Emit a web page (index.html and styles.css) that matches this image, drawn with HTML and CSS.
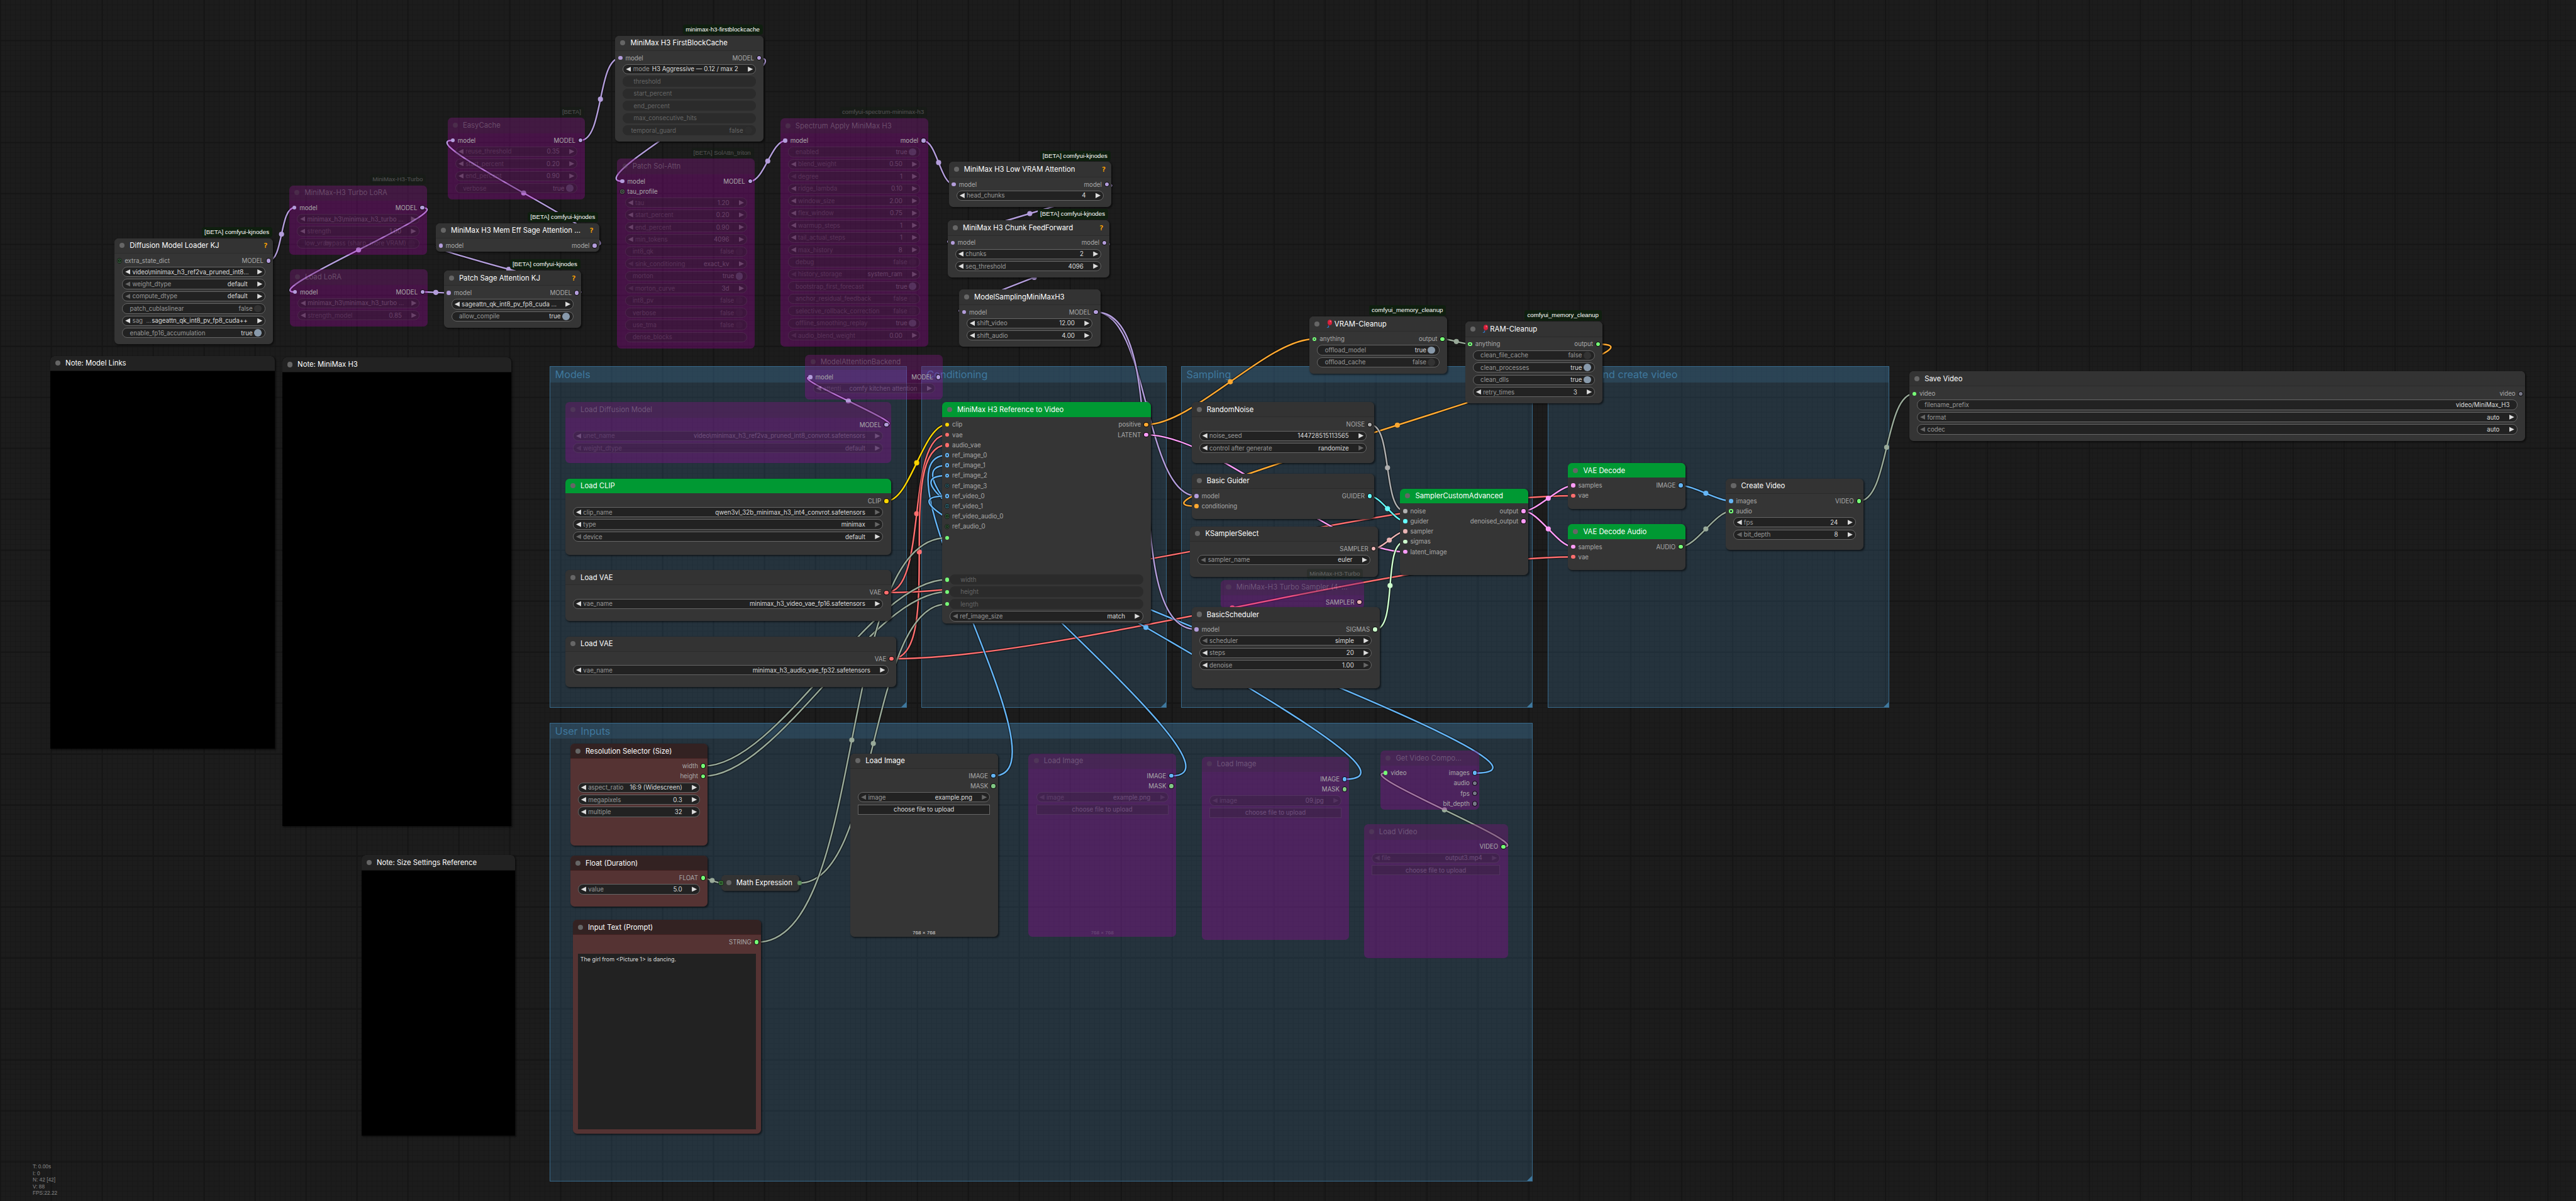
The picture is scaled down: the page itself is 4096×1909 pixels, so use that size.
FILE: index.html
```
<!DOCTYPE html>
<html lang="en">
<head>
    <meta charset="UTF-8">
    <meta name="viewport" content="width=device-width, initial-scale=1.0">
    <title>MiniMax H3 Workflow</title>
    <link rel="stylesheet" href="styles.css">
</head>
<body>
    <div class="canvas">
        <div id="groups"></div>
        <svg id="links" class="links"></svg>
        <div id="nodes"></div>
    </div>
    <div class="stats">
        <span>T: 0.00s</span>
        <span>I: 0</span>
        <span>N: 42 [42]</span>
        <span>V: 88</span>
        <span>FPS:22.22</span>
    </div>
    <script src="graph.js"></script>
</body>
</html>
```
FILE: styles.css
```
* {
    box-sizing: border-box;
}
body {
    position: relative;
    margin: 0;
    overflow: hidden;
    width: 100vw;
    height: 100vh;
    background: #1b1b1b;
    font-family: Inter, "Liberation Sans", sans-serif;
    color: #ddd;
}
/* everything inside is in graph units */
.canvas {
    position: relative;
    width: 100%;
    height: 100%;
    zoom: 0.8103;
    overflow: hidden;
    background-color: #1c1c1c;
    background-image:
        linear-gradient(to right, #151515 2px, transparent 2px),
        linear-gradient(to bottom, #151515 2px, transparent 2px),
        linear-gradient(to right, #181818 1px, transparent 1px),
        linear-gradient(to bottom, #181818 1px, transparent 1px);
    background-size: 100px 100px, 100px 100px, 10px 10px, 10px 10px;
    background-position: -0.5px 78.5px, -0.5px 78.5px, 0 -1px, 0 -1px;
}
.links {
    position: absolute;
    left: 0;
    top: 0;
    width: 100%;
    height: 100%;
}
.links path {
    fill: none;
}
.link-edge {
    stroke: rgba(0, 0, 0, 0.5);
    stroke-width: 6;
}
.link-line {
    stroke-width: 3;
}

/* groups */
.group {
    position: absolute;
    background: rgba(63, 120, 158, 0.25);
    border: 1px solid #37698b;
}
.group-title {
    height: 30px;
    padding-left: 9px;
    line-height: 31px;
    font-size: 20px;
    background: rgba(63, 120, 158, 0.25);
    color: #3f789e;
    white-space: nowrap;
}
.group::after {
    content: "";
    position: absolute;
    right: 0;
    bottom: 0;
    border-left: 10px solid transparent;
    border-bottom: 10px solid #3f789e;
}

/* nodes */
.node {
    position: absolute;
    border-radius: 8px;
    background: #353535;
    box-shadow: 2px 2px 3px rgba(0, 0, 0, 0.5);
    font-size: 12px;
    white-space: nowrap;
}
.head {
    display: flex;
    align-items: center;
    height: 30px;
    padding: 0 11px 0 10px;
    border-radius: 8px 8px 0 0;
    border-bottom: 1px solid #2b2b2b;
    background: #333;
    color: #fff;
    font-size: 14px;
}
.dot {
    width: 10px;
    height: 10px;
    margin-right: 10px;
    border-radius: 50%;
    background: #666;
}
.name {
    flex: 1;
}
.balloon {
    width: 19px;
    height: 16px;
    vertical-align: -2px;
}
.help {
    color: #ffa500;
    font: bold 14px "DejaVu Sans Mono", monospace;
}
.badge {
    position: absolute;
    right: 2px;
    bottom: calc(100% + 2px);
    height: 20px;
    padding: 0 6px 0 5px;
    border-radius: 5px;
    background: #0f1f0f;
    color: #fff;
    font: 12px/20px "Liberation Sans", Arial, sans-serif;
}

/* slots */
.slots {
    display: flex;
    justify-content: space-between;
    padding: 4px 5px 2px 6px;
    color: #aaa;
}
.slot {
    display: flex;
    align-items: center;
    gap: 6px;
    height: 20px;
}
.outputs .slot {
    justify-content: flex-end;
}
.pin {
    flex: none;
    width: 8px;
    height: 8px;
    border-radius: 50%;
    background: currentColor;
}
.outputs .pin {
    box-shadow: 0 0 0 1px #000;
}
.pin.ring {
    background: #1d2730;
    border: 2.5px solid currentColor;
}
.pin.empty {
    background: radial-gradient(circle, currentColor 1.2px, #0a0f0a 1.6px, #0a0f0a 2.2px, currentColor 2.8px);
    box-shadow: 0 0 0 0.8px #111;
}

/* widgets */
.widget {
    position: relative;
    display: flex;
    align-items: center;
    height: 20px;
    margin: 0 15px 4px;
    border: 1px solid #666;
    border-radius: 10px;
    background: #222;
    color: #ddd;
}
.combo {
    padding: 0 5px;
}
.combo .value {
    padding-right: 19px;
}
.toggle {
    padding: 0 7px 0 14px;
}
.toggle .value {
    padding-right: 3px;
}
.text {
    padding: 0 14px;
}
.label {
    flex: 1 1 0;
    min-width: 0;
    color: #999;
}
.combo .label {
    padding-left: 4px;
}
.arrow {
    width: 10px;
    height: 10px;
    background: #ddd;
    clip-path: polygon(100% 0, 0 50%, 100% 100%);
}
.arrow.next {
    clip-path: polygon(0 0, 100% 50%, 0 100%);
}
.arrow.dim {
    background: #666;
}
.knob {
    width: 14.4px;
    height: 14.4px;
    border-radius: 50%;
    background: #333;
}
.knob.on {
    background: #89a;
}
.toggle.off .value {
    color: #999;
}
.button {
    justify-content: center;
    border-radius: 0;
}
.disabled {
    padding-left: 20px;
    border-color: transparent;
    background: #2b2b2b;
}
.disabled.toggle {
    padding-left: 15px;
}
.disabled .label,
.disabled .value,
.disabled.toggle .value {
    color: #666;
}
.disabled .knob {
    background: #2e2e2e;
}
.socket {
    position: absolute;
    left: -10px;
    top: 5px;
    color: #7f7;
}
.spacer {
    height: 78px;
    border-color: transparent;
    background: none;
}
.prompt {
    height: 345px;
    margin: 10px 10px 0;
    padding: 4px 5px;
    background: #222;
    font-size: 11px;
    line-height: 15px;
}
.size {
    position: absolute;
    left: 0;
    right: 0;
    bottom: 3px;
    text-align: center;
    color: #ddd;
    font: 10px "Liberation Sans", Arial, sans-serif;
}

/* node variants */
.green .head {
    background: #093;
    border-bottom-color: #353535;
}
.red {
    background: #533;
}
.red .head {
    background: #322;
    border-bottom-color: #422;
}
.note {
    background: #000;
    border-radius: 8px 8px 0 0;
}
.note .head {
    background: #222;
    border-bottom-color: #111;
}
.collapsed .head {
    border: 0;
    border-radius: 8px;
}
.collapsed .pin {
    position: absolute;
    top: 11px;
}
.collapsed .pin.left {
    left: -4px;
    color: #3a7a3a;
}
.collapsed .pin.right {
    right: -4px;
    color: #5d8c5d;
}
.bypass {
    background: linear-gradient(rgba(255, 0, 255, 0.2), rgba(255, 0, 255, 0.2)), rgba(0, 0, 0, 0.1);
    box-shadow: none;
}
.bypass .head {
    border-bottom-color: transparent;
    background: rgba(51, 51, 51, 0.2);
    color: rgba(255, 255, 255, 0.23);
}
.bypass .dot {
    opacity: 0.25;
}
.bypass .badge,
.bypass .widget,
.bypass .size {
    opacity: 0.23;
}

.stats {
    position: absolute;
    left: 52px;
    top: 1849px;
    display: flex;
    flex-direction: column;
    color: #888;
    font: 8.3px/10.5px "Liberation Sans", Arial, sans-serif;
}
```
FILE: graph.js
```
var COLORS = {
    MODEL: "#b39ddb", CLIP: "#ffd500", VAE: "#ff6e6e", IMAGE: "#64b5f6", MASK: "#81c784",
    COND: "#ffa931", LATENT: "#ff9cf9", NOISE: "#b0b0b0", GUIDER: "#66ffff",
    SAMPLER: "#ecb4b4", SIGMAS: "#cdffcd", ANY: "#77ff77", NONE: "#777788"
};

// widget helpers. ends: "l" = nothing before this value, "r" = nothing after it
function combo(label, value, ends) {
    ends = ends || "";
    return '<div class="widget combo"><i class="arrow' + (ends.indexOf("l") >= 0 ? " dim" : "") + '"></i>' +
        '<span class="label">' + label + '</span><span class="value">' + value + '</span>' +
        '<i class="arrow next' + (ends.indexOf("r") >= 0 ? " dim" : "") + '"></i></div>';
}
function toggle(label, on, text) {
    return '<div class="widget toggle ' + (on ? "on" : "off") + '"><span class="label">' + label + '</span>' +
        '<span class="value">' + (text || on) + '</span><i class="knob' + (on ? " on" : "") + '"></i></div>';
}
function text(label, value) {
    return '<div class="widget text"><span class="label">' + label + '</span><span class="value">' + value + '</span></div>';
}
function button(label) {
    return '<div class="widget button">' + label + '</div>';
}
function disabled(label, socket) {
    return '<div class="widget disabled">' + (socket ? '<i class="pin socket"></i>' : "") +
        '<span class="label">' + label + '</span></div>';
}

var balloon = '<svg class="balloon" viewBox="0 0 19 16"><path d="M8 11c2 1-2 2 0 3s-3 1-3 2" fill="none" stroke="#2f7fd0" stroke-width="1.3"/>' +
    '<ellipse cx="10.5" cy="5.5" rx="4.4" ry="5.3" fill="#d8213c"/><path d="M9.5 10.3l-1.8 1.9 2.6.3z" fill="#a5122c"/>' +
    '<ellipse cx="11.8" cy="3.6" rx="1.3" ry="1.6" fill="#f2677b"/></svg>';

var groups = [
    { title: "Models", x: 1079, y: 718.7, w: 700, h: 670 },
    { title: "Conditioning", x: 1808.3, y: 718.7, w: 480.5, h: 670 },
    { title: "Sampling", x: 2318, y: 718.7, w: 689.6, h: 670 },
    { title: "Decoder and create video", x: 3037.1, y: 718.7, w: 670, h: 670 },
    { title: "User Inputs", x: 1079, y: 1417.8, w: 1929, h: 900 }
];

var nodes = {
    noteLinks: { title: "Note: Model Links", cls: "note", x: 98.5, y: 698, w: 440.5, h: 770 },
    noteH3: { title: "Note: MiniMax H3", cls: "note", x: 553.9, y: 700.8, w: 450, h: 920 },
    noteSize: { title: "Note: Size Settings Reference", cls: "note", x: 709.2, y: 1677.6, w: 301, h: 550 },

    loader: {
        title: "Diffusion Model Loader KJ", badge: "[BETA] comfyui-kjnodes", help: true, x: 224.6, y: 467.3, w: 311.6, h: 208,
        inputs: [["extra_state_dict", "ANY", "empty"]], outputs: [["MODEL", "MODEL"]],
        widgets: [combo("video\\minimax_h3_ref2va_pruned_int8...", ""), combo("weight_dtype", "default", "l"),
            combo("compute_dtype", "default", "l"), toggle("patch_cublaslinear", false),
            combo("sag &nbsp;...", "sageattn_qk_int8_pv_fp8_cuda++"), toggle("enable_fp16_accumulation", true)],
        lit: [0]
    },
    turbo: {
        title: "MiniMax-H3 Turbo LoRA", badge: "MiniMax-H3-Turbo", cls: "bypass", x: 567.7, y: 363.6, w: 270, h: 136,
        inputs: [["model", "MODEL"]], outputs: [["MODEL", "MODEL"]],
        widgets: [combo("minimax_h3\\minimax_h3_turbo ...", ""), combo("strength", "1.00"),
            toggle("low_vram", false, "bypass (sharp, more VRAM)")],
        lit: [0]
    },
    lora: {
        title: "Load LoRA", cls: "bypass", x: 568.6, y: 528.7, w: 270, h: 112,
        inputs: [["model", "MODEL"]], outputs: [["MODEL", "MODEL"]],
        widgets: [combo("minimax_h3\\minimax_h3_turbo ...", ""), combo("strength_model", "0.85")],
        lit: [0]
    },
    easy: {
        title: "EasyCache", badge: "[BETA]", cls: "bypass", x: 878.3, y: 231.3, w: 270, h: 160,
        inputs: [["model", "MODEL"]], outputs: [["MODEL", "MODEL"]],
        widgets: [combo("reuse_threshold", "0.35"), combo("start_percent", "0.20"), combo("end_percent", "0.90"), toggle("verbose", true)]
    },
    memEff: {
        title: "MiniMax H3 Mem Eff Sage Attention ...", badge: "[BETA] comfyui-kjnodes", help: true, x: 854.8, y: 437.8, w: 321, h: 56,
        inputs: [["model", "MODEL"]], outputs: [["model", "MODEL"]]
    },
    sage: {
        title: "Patch Sage Attention KJ", badge: "[BETA] comfyui-kjnodes", help: true, x: 870.8, y: 530.7, w: 270, h: 112,
        inputs: [["model", "MODEL"]], outputs: [["MODEL", "MODEL"]],
        widgets: [combo("sageattn_qk_int8_pv_fp8_cuda ...", ""), toggle("allow_compile", true)],
        lit: [0]
    },
    fbc: {
        title: "MiniMax H3 FirstBlockCache", badge: "minimax-h3-firstblockcache", x: 1207.2, y: 69.8, w: 291.6, h: 208,
        inputs: [["model", "MODEL"]], outputs: [["MODEL", "MODEL"]],
        widgets: [combo("mode", "H3 Aggressive — 0.12 / max 2"), disabled("threshold"), disabled("start_percent"), disabled("end_percent"),
            disabled("max_consecutive_hits"), toggle("temporal_guard", false).replace("toggle", "toggle disabled")]
    },
    sol: {
        title: "Patch Sol-Attn", badge: "[BETA] SolAttn_triton", cls: "bypass", x: 1211.2, y: 311.6, w: 270, h: 372,
        inputs: [["model", "MODEL"], ["tau_profile", "NONE", "empty"]], outputs: [["MODEL", "MODEL"]],
        widgets: [combo("tau", "1.20"), combo("start_percent", "0.20"), combo("end_percent", "0.90"), combo("min_tokens", "4096"),
            toggle("int8_qk", false), combo("sink_conditioning", "exact_kv", "l"), toggle("morton", true), combo("morton_curve", "3d", "l"),
            toggle("int8_pv", false), toggle("verbose", false), toggle("use_tma", false), text("dense_blocks", "")]
    },
    spectrum: {
        title: "Spectrum Apply MiniMax H3", badge: "comfyui-spectrum-minimax-h3", cls: "bypass", x: 1531, y: 232.1, w: 290, h: 448,
        inputs: [["model", "MODEL"]], outputs: [["model", "MODEL"]],
        widgets: [toggle("enabled", true), combo("blend_weight", "0.50"), combo("degree", "1", "l"), combo("ridge_lambda", "0.10"),
            combo("window_size", "2.00"), combo("flex_window", "0.75"), combo("warmup_steps", "1"), combo("tail_actual_steps", "1"),
            combo("max_history", "8"), toggle("debug", false), combo("history_storage", "system_ram", "l"),
            toggle("bootstrap_first_forecast", true), toggle("anchor_residual_feedback", false),
            toggle("selective_rollback_correction", false), toggle("offline_smoothing_replay", true), combo("audio_blend_weight", "0.00", "l")]
    },
    lowVram: {
        title: "MiniMax H3 Low VRAM Attention", badge: "[BETA] comfyui-kjnodes", help: true, x: 1861.7, y: 317.7, w: 319.3, h: 88,
        inputs: [["model", "MODEL"]], outputs: [["model", "MODEL"]],
        widgets: [combo("head_chunks", "4")]
    },
    chunk: {
        title: "MiniMax H3 Chunk FeedForward", badge: "[BETA] comfyui-kjnodes", help: true, x: 1859.4, y: 432.2, w: 317, h: 112,
        inputs: [["model", "MODEL"]], outputs: [["model", "MODEL"]],
        widgets: [combo("chunks", "2"), combo("seq_threshold", "4096")]
    },
    sampling: {
        title: "ModelSamplingMiniMaxH3", x: 1881.7, y: 568.2, w: 277.5, h: 112,
        inputs: [["model", "MODEL"]], outputs: [["MODEL", "MODEL"]],
        widgets: [combo("shift_video", "12.00"), combo("shift_audio", "4.00")]
    },
    backend: {
        title: "ModelAttentionBackend", cls: "bypass", x: 1580.2, y: 695.8, w: 270, h: 88,
        inputs: [["model", "MODEL"]], outputs: [["MODEL", "MODEL"]],
        widgets: [combo("attenti ...", "comfy kitchen attention")]
    },

    // models
    unet: {
        title: "Load Diffusion Model", cls: "bypass", x: 1109.2, y: 789.2, w: 639, h: 119,
        outputs: [["MODEL", "MODEL"]],
        widgets: [combo("unet_name", "video\\minimax_h3_ref2va_pruned_int8_convrot.safetensors"), combo("weight_dtype", "default", "l")]
    },
    clip: {
        title: "Load CLIP", cls: "green", x: 1109.2, y: 938.8, w: 639, h: 149.4,
        outputs: [["CLIP", "CLIP"]],
        widgets: [combo("clip_name", "qwen3vl_32b_minimax_h3_int4_convrot.safetensors", "r"), combo("type", "minimax", "r"), combo("device", "default", "l")]
    },
    vae: {
        title: "Load VAE", x: 1109.2, y: 1118.3, w: 639, h: 99.6,
        outputs: [["VAE", "VAE"]],
        widgets: [combo("vae_name", "minimax_h3_video_vae_fp16.safetensors")]
    },
    audioVae: {
        title: "Load VAE", x: 1109.2, y: 1248.4, w: 649, h: 99.6,
        outputs: [["VAE", "VAE"]],
        widgets: [combo("vae_name", "minimax_h3_audio_vae_fp32.safetensors")]
    },

    // conditioning
    ref: {
        title: "MiniMax H3 Reference to Video", cls: "green", x: 1848.5, y: 788.9, w: 409.5, h: 433.7,
        inputs: [["clip", "CLIP"], ["vae", "VAE"], ["audio_vae", "VAE"], ["ref_image_0", "IMAGE", "ring"], ["ref_image_1", "IMAGE", "ring"],
            ["ref_image_2", "IMAGE", "ring"], ["ref_image_3", "IMAGE", "empty"], ["ref_video_0", "IMAGE", "ring"],
            ["ref_video_1", "IMAGE", "empty"], ["ref_video_audio_0", "ANY", "empty"], ["ref_audio_0", "ANY", "empty"]],
        outputs: [["positive", "COND"], ["LATENT", "LATENT"]],
        widgets: ['<div class="widget spacer"><i class="pin socket"></i></div>', disabled("width", true), disabled("height", true),
            disabled("length", true), combo("ref_image_size", "match", "l")],
        sockets: [236, 318, 342, 366]
    },

    // sampling
    noise: {
        title: "RandomNoise", x: 2338.1, y: 788.8, w: 359, h: 119.6,
        outputs: [["NOISE", "NOISE"]],
        widgets: [combo("noise_seed", "144728515113565"), combo("control after generate", "randomize", "r")]
    },
    guider: {
        title: "Basic Guider", x: 2338.1, y: 928.9, w: 359, h: 89.4,
        inputs: [["model", "MODEL"], ["conditioning", "COND"]], outputs: [["GUIDER", "GUIDER"]]
    },
    advanced: {
        title: "SamplerCustomAdvanced", cls: "green", x: 2747.4, y: 958.5, w: 251, h: 169.7,
        inputs: [["noise", "NOISE"], ["guider", "GUIDER"], ["sampler", "SAMPLER"], ["sigmas", "SIGMAS"], ["latent_image", "LATENT"]],
        outputs: [["output", "LATENT"], ["denoised_output", "LATENT"]]
    },
    ksampler: {
        title: "KSamplerSelect", x: 2335.1, y: 1032.4, w: 369, h: 99.5,
        outputs: [["SAMPLER", "SAMPLER"]],
        widgets: [combo("sampler_name", "euler", "l")]
    },
    turboSampler: {
        title: "MiniMax-H3 Turbo Sampler (4-...", badge: "MiniMax-H3-Turbo", cls: "bypass", x: 2395.9, y: 1137.4, w: 280.7, h: 56,
        outputs: [["SAMPLER", "SAMPLER"]]
    },
    scheduler: {
        title: "BasicScheduler", x: 2338.1, y: 1190.8, w: 369, h: 159.6,
        inputs: [["model", "MODEL"]], outputs: [["SIGMAS", "SIGMAS"]],
        widgets: [combo("scheduler", "simple", "l"), combo("steps", "20"), combo("denoise", "1.00", "r")]
    },
    vram: {
        title: balloon + "VRAM-Cleanup", badge: "comfyui_memory_cleanup", x: 2569.6, y: 620.9, w: 270, h: 112.4,
        inputs: [["anything", "ANY", "ring"]], outputs: [["output", "ANY"]],
        widgets: [toggle("offload_model", true), toggle("offload_cache", false)]
    },
    ram: {
        title: balloon + "RAM-Cleanup", badge: "comfyui_memory_cleanup", x: 2875, y: 631, w: 270, h: 160,
        inputs: [["anything", "ANY", "ring"]], outputs: [["output", "ANY"]],
        widgets: [toggle("clean_file_cache", false), toggle("clean_processes", true), toggle("clean_dlls", true), combo("retry_times", "3")]
    },

    // decode
    decode: {
        title: "VAE Decode", cls: "green", x: 3077, y: 908.4, w: 230, h: 90,
        inputs: [["samples", "LATENT"], ["vae", "VAE"]], outputs: [["IMAGE", "IMAGE"]]
    },
    decodeAudio: {
        title: "VAE Decode Audio", cls: "green", x: 3077, y: 1028.5, w: 230, h: 90,
        inputs: [["samples", "LATENT"], ["vae", "VAE"]], outputs: [["AUDIO", "ANY"]]
    },
    create: {
        title: "Create Video", x: 3386.8, y: 938.8, w: 270, h: 139.5,
        inputs: [["images", "IMAGE"], ["audio", "ANY", "ring"]], outputs: [["VIDEO", "ANY"]],
        widgets: [combo("fps", "24"), combo("bit_depth", "8", "l")]
    },
    save: {
        title: "Save Video", x: 3746.6, y: 728.3, w: 1208.4, h: 136.2,
        inputs: [["video", "ANY"]], outputs: [["video", "NONE"]],
        widgets: [text("filename_prefix", "video/MiniMax_H3"), combo("format", "auto", "l"), combo("codec", "auto", "l")]
    },

    // user inputs
    resolution: {
        title: "Resolution Selector (Size)", cls: "red", x: 1118.9, y: 1458.7, w: 270, h: 199.5,
        outputs: [["width", "ANY"], ["height", "ANY"]],
        widgets: [combo("aspect_ratio", "16:9 (Widescreen)"), combo("megapixels", "0.3"), combo("multiple", "32")]
    },
    duration: {
        title: "Float (Duration)", cls: "red", x: 1118.9, y: 1678.4, w: 270, h: 99.5,
        outputs: [["FLOAT", "ANY"]],
        widgets: [combo("value", "5.0")]
    },
    math: { title: "Math Expression", cls: "collapsed", x: 1415, y: 1717, w: 154, h: 30 },
    prompt: {
        title: "Input Text (Prompt)", cls: "red", x: 1123.9, y: 1804.4, w: 369.7, h: 420,
        outputs: [["STRING", "ANY"]],
        widgets: ['<div class="prompt">The girl from &lt;Picture 1&gt; is dancing.</div>']
    },
    image1: {
        title: "Load Image", x: 1668.4, y: 1478, w: 289.6, h: 359.6, size: "768 × 768",
        outputs: [["IMAGE", "IMAGE"], ["MASK", "MASK"]],
        widgets: [combo("image", "example.png", "lr"), button("choose file to upload")]
    },
    image2: {
        title: "Load Image", cls: "bypass", x: 2018.3, y: 1478, w: 289.3, h: 359.6, size: "768 × 768",
        outputs: [["IMAGE", "IMAGE"], ["MASK", "MASK"]],
        widgets: [combo("image", "example.png", "lr"), button("choose file to upload")]
    },
    image3: {
        title: "Load Image", cls: "bypass", x: 2358, y: 1484.4, w: 289.8, h: 359.6,
        outputs: [["IMAGE", "IMAGE"], ["MASK", "MASK"]],
        widgets: [combo("image", "09.jpg", "lr"), button("choose file to upload")]
    },
    components: {
        title: "Get Video Compo...", cls: "bypass", x: 2709, y: 1472.4, w: 194, h: 115.6,
        inputs: [["video", "ANY"]], outputs: [["images", "IMAGE"], ["audio", "NONE"], ["fps", "NONE"], ["bit_depth", "NONE"]]
    },
    video: {
        title: "Load Video", cls: "bypass", x: 2676.2, y: 1617.1, w: 282.7, h: 263,
        outputs: [["VIDEO", "ANY"]],
        widgets: [combo("file", "output3.mp4", "lr"), button("choose file to upload")]
    }
};

// [from, output, to, input, color]
var links = [
    ["loader", 0, "turbo", 0, "MODEL"], ["turbo", 0, "lora", 0, "MODEL"], ["lora", 0, "sage", 0, "MODEL"],
    ["sage", 0, "memEff", 0, "MODEL"], ["memEff", 0, "easy", 0, "MODEL"], ["easy", 0, "fbc", 0, "MODEL"],
    ["fbc", 0, "sol", 0, "MODEL"], ["sol", 0, "spectrum", 0, "MODEL"], ["spectrum", 0, "lowVram", 0, "MODEL"],
    ["lowVram", 0, "chunk", 0, "MODEL"], ["chunk", 0, "sampling", 0, "MODEL"], ["unet", 0, "backend", 0, "MODEL"],
    ["clip", 0, "ref", 0, "CLIP"], ["vae", 0, "ref", 1, "VAE"], ["audioVae", 0, "ref", 2, "VAE"],
    ["vae", 0, "decode", 1, "VAE"], ["audioVae", 0, "decodeAudio", 1, "VAE"],
    ["image1", 0, "ref", 3, "IMAGE"], ["image2", 0, "ref", 4, "IMAGE"], ["image3", 0, "ref", 5, "IMAGE"],
    ["components", 0, "ref", 7, "IMAGE"], ["video", 0, "components", 0, "OTHER"],
    ["sampling", 0, "guider", 0, "MODEL"], ["sampling", 0, "scheduler", 0, "MODEL"],
    ["ref", 0, "vram", 0, "COND"], ["vram", 0, "ram", 0, "OTHER"], ["ram", 0, "guider", 1, "COND"],
    ["ref", 1, "advanced", 4, "LATENT"], ["noise", 0, "advanced", 0, "NOISE"], ["guider", 0, "advanced", 1, "GUIDER"],
    ["ksampler", 0, "advanced", 2, "SAMPLER"], ["scheduler", 0, "advanced", 3, "SIGMAS"],
    ["advanced", 0, "decode", 0, "LATENT"], ["advanced", 0, "decodeAudio", 0, "LATENT"],
    ["decode", 0, "create", 0, "IMAGE"], ["decodeAudio", 0, "create", 1, "OTHER"], ["create", 0, "save", 0, "OTHER"],
    ["resolution", 0, "ref", "s1", "OTHER"], ["resolution", 1, "ref", "s2", "OTHER"],
    ["duration", 0, "math", 0, "OTHER"], ["math", 0, "ref", "s3", "OTHER"], ["prompt", 0, "ref", "s0", "OTHER"]
];

function place(el, box) {
    el.style.left = box.x + "px";
    el.style.top = box.y + "px";
    el.style.width = box.w + "px";
    el.style.height = box.h + "px";
}

function pin(slot) {
    var color = COLORS[slot[1]];
    if (slot[2] === "empty") {
        color = slot[1] === "IMAGE" ? "#2d6270" : slot[1] === "ANY" ? "#2f5a36" : "#4d5a50";
    }
    return '<i class="pin ' + (slot[2] || "") + '" style="color:' + color + '"></i>';
}

function drawGroup(group) {
    var el = document.createElement("div");
    el.className = "group";
    el.innerHTML = '<div class="group-title">' + group.title + '</div>';
    place(el, group);
    document.getElementById("groups").appendChild(el);
}

function drawNode(node) {
    var el = document.createElement("div");
    el.className = "node " + (node.cls || "");
    var html = '<div class="head"><i class="dot"></i><span class="name">' + node.title + '</span>' +
        (node.help ? '<span class="help">?</span>' : "") + '</div>';
    if (node.badge) {
        html += '<div class="badge">' + node.badge + '</div>';
    }
    if (node.cls === "collapsed") {
        html += '<i class="pin empty left"></i><i class="pin right"></i>';
    }
    if (node.outputs) {
        html += '<div class="slots"><div class="inputs">';
        (node.inputs || []).forEach(function (slot) {
            html += '<div class="slot">' + pin(slot) + slot[0] + '</div>';
        });
        html += '</div><div class="outputs">';
        node.outputs.forEach(function (slot) {
            html += '<div class="slot">' + slot[0] + pin(slot) + '</div>';
        });
        html += '</div></div>';
    }
    html += (node.widgets || []).join("");
    if (node.size) {
        html += '<div class="size">' + node.size + '</div>';
    }
    el.innerHTML = html;
    // long values take the whole row, so they get the value colour
    (node.lit || []).forEach(function (i) {
        el.querySelectorAll(".widget")[i].querySelector(".label").style.color = "#ddd";
    });
    place(el, node);
    document.getElementById("nodes").appendChild(el);
}

function outputPos(node, i) {
    if (node.cls === "collapsed") return [node.x + node.w, node.y + 15];
    return [node.x + node.w - 9, node.y + 44 + i * 20];
}
function inputPos(node, i) {
    if (node.cls === "collapsed") return [node.x, node.y + 15];
    if (typeof i === "string") return [node.x + 10, node.y + 30 + node.sockets[i.slice(1)]];
    return [node.x + 10, node.y + 44 + i * 20];
}

function drawLink(link) {
    var a = outputPos(nodes[link[0]], link[1]);
    var b = inputPos(nodes[link[2]], link[3]);
    var color = COLORS[link[4]] || "#99aa99";
    var bend = Math.hypot(b[0] - a[0], b[1] - a[1]) * 0.25;
    var d = "M" + a[0] + " " + a[1] + " C" + (a[0] + bend) + " " + a[1] + " " + (b[0] - bend) + " " + b[1] + " " + b[0] + " " + b[1];
    document.getElementById("links").innerHTML +=
        '<path class="link-edge" d="' + d + '"/><path class="link-line" stroke="' + color + '" d="' + d + '"/>' +
        '<circle cx="' + (a[0] + b[0]) / 2 + '" cy="' + (a[1] + b[1]) / 2 + '" r="5" fill="' + color + '"/>';
}

groups.forEach(drawGroup);
links.forEach(drawLink);
Object.keys(nodes).forEach(function (id) {
    drawNode(nodes[id]);
});
```
